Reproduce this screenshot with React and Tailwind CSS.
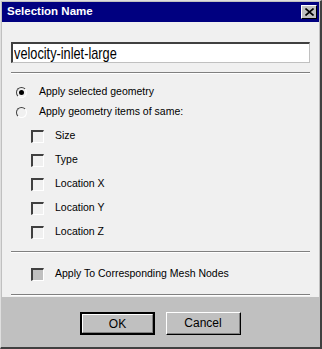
import React from "react";

function Check({ disabled }) {
  return (
    <span
      className={`inline-block shrink-0 w-[13px] h-[13px] border-t-2 border-l-2 border-b border-r border-t-[#404040] border-l-[#404040] border-b-white border-r-white ${disabled ? "bg-[#c0c0c0]" : "bg-[#f0f0f0]"}`}
    />
  );
}

function Radio({ checked }) {
  return (
    <span className="relative inline-block shrink-0 w-[11px] h-[11px] rounded-full border border-t-[#404040] border-l-[#404040] border-b-white border-r-white bg-[#f0f0f0]">
      {checked && <span className="absolute left-[2px] top-[2px] w-[5px] h-[5px] rounded-full bg-black" />}
    </span>
  );
}

function Sep({ className }) {
  return <div className={`h-[2px] border-t border-t-[#808080] border-b border-b-white ${className}`} />;
}

export default function App() {
  const items = ["Size", "Type", "Location X", "Location Y", "Location Z"];
  return (
    <div className="w-[322px] h-[349px] bg-[#c0c0c0] border-l border-t border-l-[#dfdfdf] border-t-[#dfdfdf] border-r-2 border-b-2 border-r-[#404040] border-b-[#404040] flex flex-col font-['Liberation_Sans',Arial,sans-serif] text-black overflow-hidden">
      <div className="mx-[1px] mt-[1px] h-[20px] shrink-0 bg-[#000080] flex items-center justify-between pl-[5px] pr-[2px]">
        <span className="text-white text-[11.5px] font-bold">Selection Name</span>
        <span className="w-[16px] h-[14px] bg-[#c0c0c0] border border-t-white border-l-white border-r-black border-b-black flex items-center justify-center">
          <svg width="9" height="8" viewBox="0 0 9 8">
            <path d="M0.5 0.5 L8.5 7.5 M8.5 0.5 L0.5 7.5" stroke="black" strokeWidth="1.6" />
          </svg>
        </span>
      </div>
      <div className="mx-[1px] shrink-0 bg-[#f0f0f0] flex flex-col px-[9px] pt-[20px] h-[275px]">
        <div className="h-[21px] shrink-0 bg-white border-t-2 border-l-2 border-b border-r border-t-[#404040] border-l-[#404040] border-b-[#c0c0c0] border-r-[#c0c0c0] flex items-center pl-[1px] overflow-hidden">
          <span className="text-[17px] leading-none origin-left scale-x-[0.75] whitespace-nowrap">velocity-inlet-large</span>
        </div>
        <Sep className="mt-[9px]" />
        <div className="mt-[8px] flex flex-col text-[10.5px]">
          <div className="flex items-center h-[20px] pl-[5px]">
            <Radio checked />
            <span className="ml-[12px]">Apply selected geometry</span>
          </div>
          <div className="flex items-center h-[20px] pl-[5px]">
            <Radio />
            <span className="ml-[12px]">Apply geometry items of same:</span>
          </div>
          <div className="mt-[2px] flex flex-col">
            {items.map((t) => (
              <div key={t} className="flex items-center h-[24px] pl-[20px]">
                <Check />
                <span className="ml-[11px]">{t}</span>
              </div>
            ))}
          </div>
        </div>
        <Sep className="mt-[7px]" />
        <div className="mt-[13px] flex items-center h-[16px] pl-[20px] text-[10.5px]">
          <Check disabled />
          <span className="ml-[11px]">Apply To Corresponding Mesh Nodes</span>
        </div>
        <Sep className="mt-[12px]" />
      </div>
      <div className="flex-1 flex justify-center items-start pt-[15px] gap-[11px] text-[12px]">
        <button className="w-[75px] h-[23px] bg-[#c0c0c0] border-2 border-black flex items-center justify-center">
          <span className="w-full h-full border border-t-white border-l-white border-b-[#808080] border-r-[#808080] flex items-center justify-center">OK</span>
        </button>
        <button className="w-[75px] h-[23px] bg-[#c0c0c0] border border-t-white border-l-white border-b-black border-r-black flex items-center justify-center">
          <span className="w-full h-full border-r border-b border-b-[#808080] border-r-[#808080] flex items-center justify-center">Cancel</span>
        </button>
      </div>
    </div>
  );
}
